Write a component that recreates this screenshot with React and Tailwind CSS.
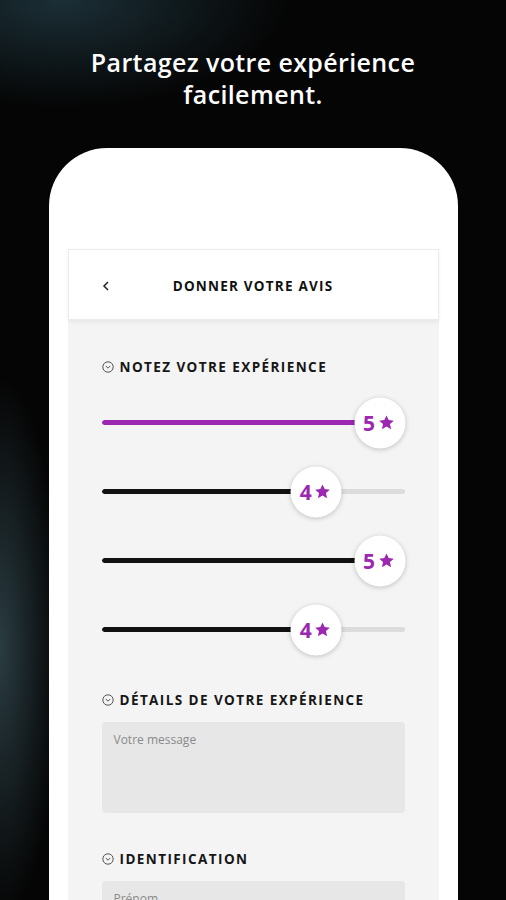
import React from 'react';

const ratings = [
  { value: 5, color: '#9c27b0' },
  { value: 4, color: '#111111' },
  { value: 5, color: '#111111' },
  { value: 4, color: '#111111' },
];

const SectionIcon = () => (
  <svg width="12" height="12" viewBox="0 0 12 12" fill="none" stroke="#555" strokeWidth="1">
    <circle cx="6" cy="6" r="5.2" />
    <polyline points="3.8,5 6,7.2 8.2,5" />
  </svg>
);

const Star = () => (
  <svg width="18" height="18" viewBox="0 0 24 24" fill="#9c27b0">
    <path d="M12 2.5l2.9 6.3 6.9.7-5.2 4.6 1.5 6.8L12 17.4l-6.1 3.5 1.5-6.8L2.2 9.5l6.9-.7z" />
  </svg>
);

const SectionTitle = ({ children, className }) => (
  <div className={'flex items-center gap-[6px] h-4 ' + (className || '')}>
    <SectionIcon />
    <span className="text-[13.5px] font-bold tracking-[0.105em] text-[#161616] [font-family:'Open_Sans',sans-serif]">{children}</span>
  </div>
);

const Slider = ({ value, color }) => {
  // thumb center runs from 25px to (width - 25px) for values 1..5
  const pct = (value - 1) / 4;
  return (
    <div className="relative h-[69px] flex items-center">
      <div className="w-full h-[5px] rounded-full bg-[#dcdcdc] overflow-hidden">
        <div
          className="h-full rounded-full"
          style={{ width: `calc(25px + (100% - 50px) * ${pct})`, background: color }}
        />
      </div>
      <div
        className="absolute top-1/2 -translate-y-1/2 -translate-x-1/2 w-[51px] h-[51px] rounded-full bg-white shadow-[0_1px_5px_rgba(0,0,0,0.22)] flex items-center justify-center gap-[2px] pr-[1px]"
        style={{ left: `calc(25px + (100% - 50px) * ${pct})` }}
      >
        <span className="text-[21px] leading-none font-bold text-[#9c27b0] [font-family:'Open_Sans',sans-serif]">{value}</span>
        <Star />
      </div>
    </div>
  );
};

export default function App() {
  return (
    <div className="h-[900px] overflow-hidden bg-[#050505] bg-[radial-gradient(ellipse_45%_12%_at_12%_0%,#1b2f36_0%,transparent_100%),radial-gradient(ellipse_12%_30%_at_0%_72%,#2a3c42_0%,transparent_100%)] [font-family:'Open_Sans',sans-serif]">
      <h1 className="pt-[46px] text-center text-white text-[25px] leading-[32px] font-semibold tracking-[0.015em]">
        Partagez votre expérience
        <br />
        facilement.
      </h1>

      <div className="mx-auto mt-[38px] w-[409px] h-[800px] bg-white rounded-t-[58px] px-[19px] pt-[101px]">
        <div className="bg-[#f4f4f4] h-full">
          <div className="relative h-[71px] bg-white border border-[#ebebeb] shadow-[0_2px_4px_rgba(0,0,0,0.06)] flex items-center justify-center pt-[3px]">
            <svg className="absolute left-[33px] top-[31px]" width="8" height="10" viewBox="0 0 8 10" fill="none" stroke="#222" strokeWidth="1.5">
              <polyline points="6,1 2,5 6,9" />
            </svg>
            <span className="text-[13.5px] font-bold tracking-[0.09em] text-[#111]">DONNER VOTRE AVIS</span>
          </div>

          <div className="px-[34px] pt-[39px]">
            <SectionTitle>NOTEZ VOTRE EXPÉRIENCE</SectionTitle>
            <div className="mt-[13px]">
              {ratings.map((r, i) => (
                <Slider key={i} value={r.value} color={r.color} />
              ))}
            </div>

            <SectionTitle className="mt-[28px]">DÉTAILS DE VOTRE EXPÉRIENCE</SectionTitle>
            <div className="mt-[14px] h-[91px] rounded bg-[#e7e7e7] px-3 pt-[9px] text-[12px] text-[#8a8a8a]">
              Votre message
            </div>

            <SectionTitle className="mt-[38px]">IDENTIFICATION</SectionTitle>
            <div className="mt-[14px] h-[45px] rounded bg-[#e7e7e7] px-3 pt-[9px] text-[12px] text-[#8a8a8a]">
              Prénom
            </div>
          </div>
        </div>
      </div>
    </div>
  );
}
